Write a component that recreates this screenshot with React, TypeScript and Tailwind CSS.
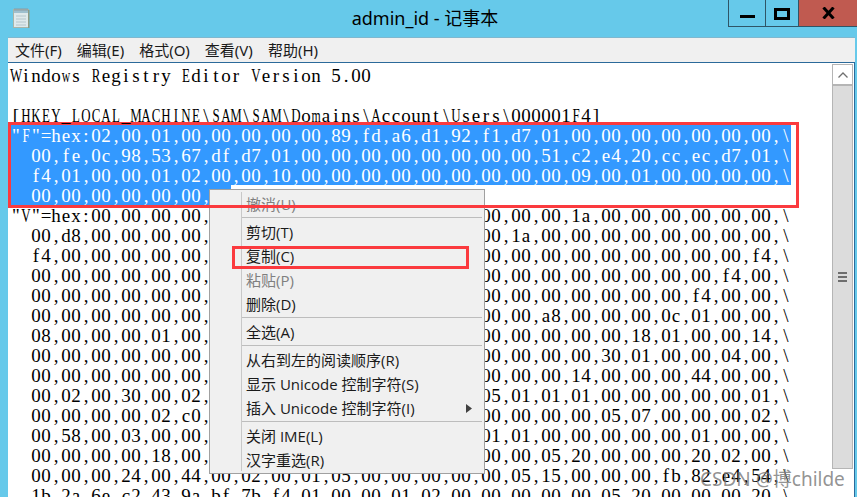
const fill = (left: string, right: string, n = 25) =>
  left + "00,".repeat(n - (left.length + right.length) / 3) + right;

const ROWS = [
  { text: "Windows Registry Editor Version 5.00" },
  { text: "" },
  { text: "[HKEY_LOCAL_MACHINE\\SAM\\SAM\\Domains\\Account\\Users\\000001F4]" },
  { text: '"F"=hex:02,00,01,00,00,00,00,00,89,fd,a6,d1,92,f1,d7,01,00,00,00,00,00,00,00,\\', sel: true },
  { text: "  00,fe,0c,98,53,67,df,d7,01,00,00,00,00,00,00,00,00,51,c2,e4,20,cc,ec,d7,01,\\", sel: true },
  { text: "  f4,01,00,00,01,02,00,00,10,00,00,00,00,00,00,00,00,00,09,00,01,00,00,00,00,\\", sel: true },
  { text: "  00,00,00,00,00,00,00", sel: true },
  { text: '"V"=hex:' + fill("00,00,00,00,", "1a,00,00,00,00,00,00,", 23) + "\\" },
  { text: "  " + fill("00,d8,00,00,00,00,", "1a,00,00,00,00,00,00,00,00,") + "\\" },
  { text: "  " + fill("f4,00,00,00,00,00,", "f4,") + "\\" },
  { text: "  " + fill("00,00,00,00,00,00,", "f4,00,") + "\\" },
  { text: "  " + fill("00,00,00,00,00,00,", "f4,00,00,") + "\\" },
  { text: "  " + fill("00,00,00,00,00,00,", "a8,00,00,00,0c,01,00,00,") + "\\" },
  { text: "  " + fill("08,00,00,00,01,00,", "18,01,00,00,14,") + "\\" },
  { text: "  " + fill("00,00,00,00,00,00,", "30,01,00,00,04,00,") + "\\" },
  { text: "  " + fill("00,00,00,00,00,00,", "14,00,00,00,44,00,00,") + "\\" },
  { text: "  " + fill("00,02,00,30,00,02,", "05,01,01,01,00,00,00,00,00,01,") + "\\" },
  { text: "  " + fill("00,00,00,00,02,c0,", "00,00,00,00,05,07,00,00,00,02,") + "\\" },
  { text: "  " + fill("00,58,00,03,00,00,", "01,01,00,00,00,00,00,01,00,00,") + "\\" },
  { text: "  " + fill("00,00,00,00,18,00,", "00,00,05,20,00,00,00,20,02,00,") + "\\" },
  { text: "  00,00,00,24,00,44,00,02,00,01,05,00,00,00,00,00,05,15,00,00,00,fb,82,e4,54,\\" },
  { text: "  1b,2a,6e,c2,43,9a,bf,7b,f4,01,00,00,01,02,00,00,00,00,00,05,20,00,00,00,20,\\" },
];

const MENU = [
  { label: "撤消(U)", off: true },
  { sep: true },
  { label: "剪切(T)" },
  { label: "复制(C)" },
  { label: "粘贴(P)", off: true },
  { label: "删除(D)" },
  { sep: true },
  { label: "全选(A)" },
  { sep: true },
  { label: "从右到左的阅读顺序(R)" },
  { label: "显示 Unicode 控制字符(S)" },
  { label: "插入 Unicode 控制字符(I)", sub: true },
  { sep: true },
  { label: "关闭 IME(L)" },
  { label: "汉字重选(R)" },
];

function Line({ text, sel }: { text: string; sel?: boolean }) {
  return (
    <div className={`flex h-5 w-fit font-['Liberation_Serif',serif] text-[19px] leading-[22px] ${sel ? "bg-[#3399ff] text-white" : "text-black"}`}>
      {text.split("").map((c, i) => (
        <span
          key={i}
          className={`flex w-[10px] shrink-0 justify-center ${c === "_" ? "relative z-10 scale-x-[0.95]" : /[A-Z]/.test(c) ? "scale-x-[0.68]" : /[mw]/.test(c) ? "scale-x-[0.62]" : ""}`}
        >
          {c === " " ? "\u00a0" : c}
        </span>
      ))}
    </div>
  );
}

function NotepadIcon() {
  return (
    <svg width="18" height="22" viewBox="0 0 18 22">
      <rect x="1.5" y="2.5" width="15" height="18" fill="#dfe9ec" stroke="#a9b4a8" />
      <rect x="16" y="3" width="1.5" height="18" fill="#8e9a84" />
      <rect x="2" y="3" width="14" height="3" fill="#9fc0cf" />
      <path d="M3 1v3M5 1v3M7 1v3M9 1v3M11 1v3M13 1v3M15 1v3" stroke="#8a9aa3" />
      <path d="M4 9h10M4 12h10M4 15h10M4 18h10" stroke="#b5c6cc" />
    </svg>
  );
}

function ContextMenu() {
  return (
    <div className="absolute left-[209px] top-[189px] w-[276px] border border-[#a0a0a0] bg-[#f0f0f0] pt-[3px] font-['Open_Sans','Noto_Sans_CJK_SC',sans-serif] text-[15px] text-[#1a1a1a]">
      <div className="absolute bottom-[2px] left-[31px] top-[2px] w-px bg-[#c8c8c8]" />
      {MENU.map((m, i) =>
        m.sep ? (
          <div key={i} className="ml-[31px] mr-[2px] h-1">
            <div className="h-px bg-[#bdbdbd]" />
          </div>
        ) : (
          <div key={i} className={`flex h-6 items-center pb-[2px] pl-[36px] pr-3 ${m.off ? "text-[#7f7f7f]" : ""}`}>
            <span className="flex-1 whitespace-nowrap">{m.label}</span>
            {m.sub && (
              <svg width="6" height="9" viewBox="0 0 6 9">
                <path d="M0 0l6 4.5L0 9z" fill="#404040" />
              </svg>
            )}
          </div>
        ),
      )}
    </div>
  );
}

export default function App() {
  return (
    <div className="relative flex h-[497px] w-[857px] flex-col overflow-hidden bg-[#66c9ea] font-['Noto_Sans','Noto_Sans_CJK_SC',sans-serif]">
      {/* Title bar */}
      <div className="flex h-[37px] shrink-0 items-start">
        <div className="ml-[12px] mt-[7px] flex w-[20px]">
          <NotepadIcon />
        </div>
        <div className="mt-[6px] flex-1 pl-[90px] text-center text-[18px] leading-6 text-black">admin_id - 记事本</div>
        <div className="flex h-[27px] border-b border-[#2f5566]">
          <div className="flex w-[37px] items-end justify-center border-l border-[#2f5566] pb-2">
            <div className="h-[3px] w-[15px] bg-black" />
          </div>
          <div className="flex w-[33px] justify-center border-l border-[#2f5566] pt-2">
            <div className="h-[12px] w-4 border-[3px] border-black" />
          </div>
          <div className="flex w-[59px] items-center justify-center border-l border-[#2f5566] bg-[#c05a50]">
            <svg width="13" height="12" viewBox="0 0 13 12">
              <path d="M1.5 0.5l10 11M11.5 0.5l-10 11" stroke="#000" strokeWidth="3" />
            </svg>
          </div>
        </div>
      </div>

      {/* Menu bar */}
      <div className="ml-2 mr-[2px] flex h-[25px] shrink-0 items-center gap-[15px] border-t border-[#7fb8cf] bg-[#f0f0f0] pl-[7px] text-[15px] text-[#1a1a1a]">
        <span>文件(F)</span>
        <span>编辑(E)</span>
        <span>格式(O)</span>
        <span>查看(V)</span>
        <span>帮助(H)</span>
      </div>

      {/* Text area */}
      <div className="ml-2 mr-[2px] flex min-h-0 flex-1 border-r border-t border-[#2b6a9a] bg-white">
        <div className="min-w-0 flex-1 overflow-hidden pl-[3px] pt-[2px]">
          {ROWS.map((r, i) => (
            <Line key={i} text={r.text} sel={r.sel} />
          ))}
        </div>
        <div className="mr-px mt-px flex w-[21px] shrink-0 flex-col">
          <div className="flex h-[21px] items-center justify-center border border-[#b5b5b5] bg-white">
            <svg width="10" height="6" viewBox="0 0 10 6">
              <path d="M0.5 5.5L5 1l4.5 4.5" fill="none" stroke="#707070" strokeWidth="1.3" />
            </svg>
          </div>
          <div className="flex h-[384px] flex-col items-center justify-center gap-[2px] border border-[#b5b5b5] bg-[#dcdcdc]">
            <div className="h-[2px] w-[9px] bg-[#6e6e6e]" />
            <div className="h-[2px] w-[9px] bg-[#6e6e6e]" />
            <div className="h-[2px] w-[9px] bg-[#6e6e6e]" />
          </div>
        </div>
      </div>

      <ContextMenu />

      {/* Annotations */}
      <div className="absolute left-2 top-[122px] h-[86px] w-[791px] border-[3px] border-[#fb3a3e]" />
      <div className="absolute left-[232px] top-[246px] h-[23px] w-[237px] border-[3px] border-[#fb3a3e]" />
      <div className="absolute left-[700px] top-[467px] whitespace-nowrap text-[19px] leading-6 text-[#777777]/80">CSDN @博childe</div>
    </div>
  );
}
